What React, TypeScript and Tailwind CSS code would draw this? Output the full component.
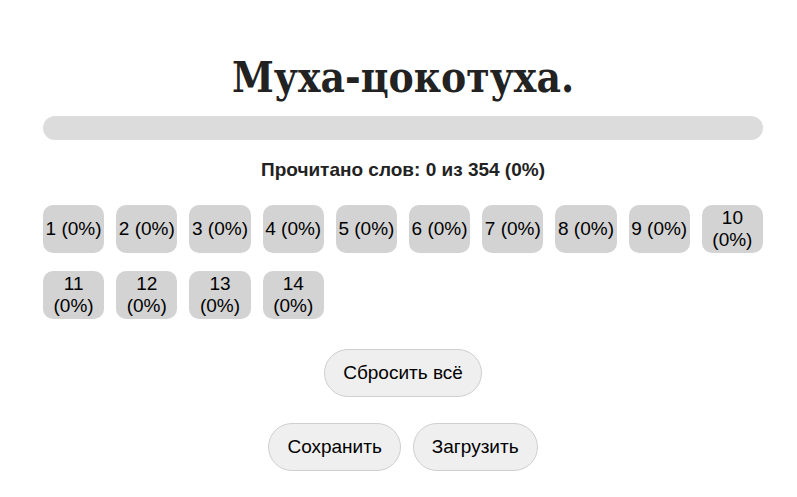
export default function App() {
  const chapters = Array.from({ length: 14 }, (_, i) => i + 1);
  return (
    <div className="min-h-screen bg-white" style={{ fontFamily: '"Liberation Sans", Arial, sans-serif' }}>
      <div className="ml-[43px] w-[720px] pt-[54px]">
        <h1
          className="text-center text-[42px] font-bold leading-[48px] text-[#222]"
          style={{ fontFamily: '"DejaVu Serif Condensed", "DejaVu Serif", serif', fontStretch: 'condensed' }}
        >
          Муха-цокотуха.
        </h1>
        <div className="mt-[14px] h-6 w-full rounded-full bg-[#dcdcdc]" />
        <p className="mt-5 text-center text-[19px] font-bold leading-[20px] text-[#222]">
          Прочитано слов: 0 из 354 (0%)
        </p>
        <div className="mt-[25px] grid grid-cols-10 gap-x-3 gap-y-[18px]">
          {chapters.map((n) => (
            <button
              key={n}
              className="flex h-12 items-center justify-center rounded-[10px] bg-[#d3d3d3] px-[2px] text-center text-[19px] leading-[22px] text-black"
            >
              {n} (0%)
            </button>
          ))}
        </div>
        <div className="mt-[30px] flex justify-center">
          <button className="h-12 rounded-full border border-[#cfcfcf] bg-[#efefef] px-[18px] text-[19px] text-black">
            Сбросить всё
          </button>
        </div>
        <div className="mt-[26px] flex justify-center gap-3">
          <button className="h-12 rounded-full border border-[#cfcfcf] bg-[#efefef] px-[18px] text-[19px] text-black">
            Сохранить
          </button>
          <button className="h-12 rounded-full border border-[#cfcfcf] bg-[#efefef] px-[18px] text-[19px] text-black">
            Загрузить
          </button>
        </div>
      </div>
    </div>
  );
}
